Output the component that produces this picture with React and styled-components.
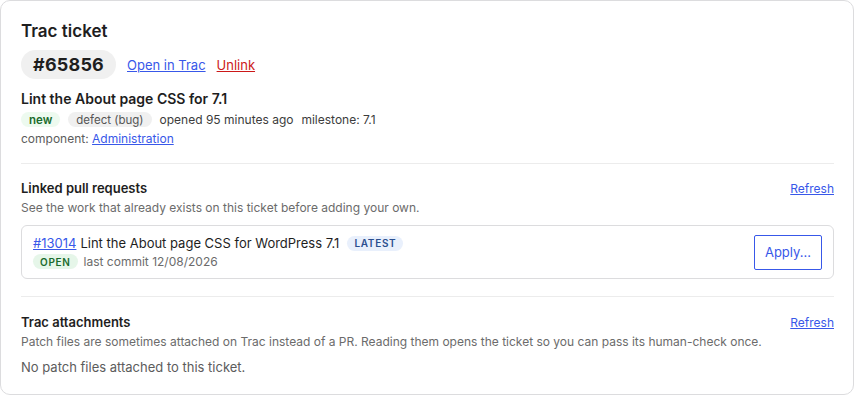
import React from "react";
import styled, { createGlobalStyle } from "styled-components";

const GlobalStyle = createGlobalStyle`
  body {
    margin: 0;
    background: #fff;
    font-family: Inter, "Noto Sans", sans-serif;
    color: #1e1e1e;
  }
`;

const StPanel = styled.div`
  width: 854px;
  box-sizing: border-box;
  border: 1px solid #dcdcde;
  border-radius: 10px;
  padding: 19px 19px 18px 20px;
  background: #fff;
`;

const StTitle = styled.h2`
  margin: 0 0 8px 0;
  font-size: 17px;
  font-weight: 600;
  line-height: 22px;
  color: #1e1e1e;
`;

const StTicketRow = styled.div`
  display: flex;
  align-items: center;
  gap: 11px;
`;

const StTicketNum = styled.span`
  display: inline-flex;
  align-items: center;
  height: 29px;
  padding: 0 12px;
  border-radius: 15px;
  background: #f0f0f0;
  font-size: 18px;
  font-weight: 700;
  letter-spacing: 0.2px;
`;

const StLink = styled.a`
  font-size: ${(props) => props.size || 13}px;
  color: ${(props) => (props.danger ? "#cc1818" : "#3858e9")};
  text-decoration: underline;
  cursor: pointer;
`;

const StSummary = styled.div`
  margin-top: 11px;
  font-size: 14px;
  font-weight: 600;
  line-height: 18px;
`;

const StMetaRow = styled.div`
  display: flex;
  align-items: center;
  gap: 8px;
  margin-top: 4px;
  font-size: 12px;
  color: #3c3c3c;
`;

const StPill = styled.span`
  display: inline-flex;
  align-items: center;
  height: 15px;
  padding: 0 ${(props) => (props.caps ? 7 : 8)}px;
  border-radius: 8px;
  font-size: ${(props) => (props.caps ? 10 : 11.5)}px;
  font-weight: ${(props) => props.weight || 600};
  letter-spacing: ${(props) => (props.caps ? "0.7px" : "0")};
  text-transform: ${(props) => (props.caps ? "uppercase" : "none")};
  background: ${(props) => props.bg};
  color: ${(props) => props.fg};
`;

const StComponent = styled.div`
  margin-top: 3px;
  font-size: 12px;
  line-height: 17px;
  color: #5c5c5c;
`;

const StDivider = styled.hr`
  border: none;
  border-top: 1px solid #ececec;
  margin: ${(props) => props.margin};
`;

const StSectionHead = styled.div`
  display: flex;
  justify-content: space-between;
  align-items: baseline;
`;

const StSectionTitle = styled.h3`
  margin: 0;
  font-size: 13px;
  font-weight: 600;
  line-height: 18px;
`;

const StHint = styled.p`
  margin: 3px 0 0 0;
  font-size: 12px;
  line-height: 16px;
  color: #6b6b6b;
`;

const StPrCard = styled.div`
  display: flex;
  align-items: center;
  justify-content: space-between;
  margin-top: 9px;
  padding: 8px 11px 8px 11px;
  border: 1px solid #dcdcde;
  border-radius: 6px;
  min-height: 36px;
`;

const StPrInfo = styled.div`
  display: flex;
  flex-direction: column;
  gap: 3px;
`;

const StPrTitleRow = styled.div`
  display: flex;
  align-items: center;
  gap: 8px;
  font-size: 13px;
  color: #1e1e1e;
`;

const StPrTitle = styled.span`
  margin-left: -4px;
`;

const StPrMeta = styled.div`
  display: flex;
  align-items: center;
  gap: 6px;
  font-size: 12px;
  color: #6b6b6b;
`;

const StApplyBtn = styled.button`
  height: 35px;
  padding: 0 10px;
  border: 1px solid #3858e9;
  border-radius: 2px;
  background: #fff;
  color: #3858e9;
  font-family: inherit;
  font-size: 13px;
  cursor: pointer;
`;

const StEmpty = styled.p`
  margin: 8px 0 0 0;
  font-size: 13px;
  line-height: 18px;
  color: #5c5c5c;
`;

const App = () => {
  return (
    <>
      <GlobalStyle />
      <StPanel>
        <StTitle>Trac ticket</StTitle>
        <StTicketRow>
          <StTicketNum>#65856</StTicketNum>
          <StLink>Open in Trac</StLink>
          <StLink danger>Unlink</StLink>
        </StTicketRow>

        <StSummary>Lint the About page CSS for 7.1</StSummary>
        <StMetaRow>
          <StPill bg="#edfaef" fg="#1a6b2d">new</StPill>
          <StPill bg="#f0f0f0" fg="#555" weight={400}>
            defect (bug)
          </StPill>
          <span>opened 95 minutes ago</span>
          <span>milestone: 7.1</span>
        </StMetaRow>
        <StComponent>
          component: <StLink size={12}>Administration</StLink>
        </StComponent>

        <StDivider margin="16px 0 15px 0" />

        {/* 연결된 PR */}
        <StSectionHead>
          <StSectionTitle>Linked pull requests</StSectionTitle>
          <StLink size={12}>Refresh</StLink>
        </StSectionHead>
        <StHint>See the work that already exists on this ticket before adding your own.</StHint>
        <StPrCard>
          <StPrInfo>
            <StPrTitleRow>
              <StLink>#13014</StLink>
              <StPrTitle>Lint the About page CSS for WordPress 7.1</StPrTitle>
              <StPill caps bg="#e9f0fc" fg="#2b4f8f">
                latest
              </StPill>
            </StPrTitleRow>
            <StPrMeta>
              <StPill caps bg="#e6f6e9" fg="#1a6b2d">
                open
              </StPill>
              <span>last commit 12/08/2026</span>
            </StPrMeta>
          </StPrInfo>
          <StApplyBtn>Apply...</StApplyBtn>
        </StPrCard>

        <StDivider margin="17px 0 16px 0" />

        {/* 첨부파일 */}
        <StSectionHead>
          <StSectionTitle>Trac attachments</StSectionTitle>
          <StLink size={12}>Refresh</StLink>
        </StSectionHead>
        <StHint>
          Patch files are sometimes attached on Trac instead of a PR. Reading them opens the ticket so you can
          pass its human-check once.
        </StHint>
        <StEmpty>No patch files attached to this ticket.</StEmpty>
      </StPanel>
    </>
  );
};

export default App;
